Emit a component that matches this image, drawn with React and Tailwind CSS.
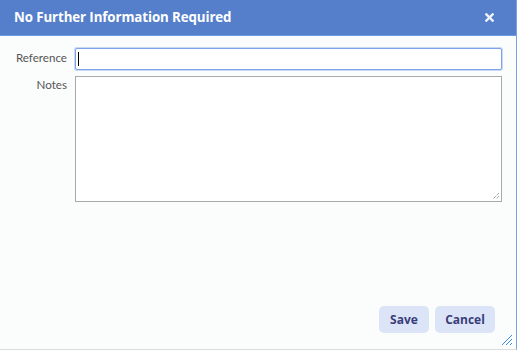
import React from 'react';

const Dialog = () => {
  return (
    <div className="w-[517px] h-[350px] flex flex-col bg-[#fbfcfc] border-r border-[#7aa0e0] border-b border-b-[#dcdcdc] relative" style={{ fontFamily: '"Open Sans", "Noto Sans", sans-serif' }}>
      {/* Title bar */}
      <div className="h-[36px] shrink-0 flex items-center justify-between bg-[#557fcb] border-b border-[#6b9be0] pl-[14px] pr-[22px]">
        <h1 className="text-white font-bold text-[13.3px] leading-none tracking-[-0.1px]">No Further Information Required</h1>
        <svg width="9" height="9" viewBox="0 0 10 10">
          <path d="M1.5 1.5 L8.5 8.5 M8.5 1.5 L1.5 8.5" stroke="#eef3fb" strokeWidth="2.6" strokeLinecap="square" />
        </svg>
      </div>

      {/* Form body */}
      <div className="flex-1 flex flex-col pt-[12px] pl-[8px] pr-[14px]" style={{ fontFamily: 'Lato, "Open Sans", sans-serif' }}>
        <div className="flex items-center gap-[8px]">
          <label className="w-[59px] text-right text-[11.6px] text-[#555] leading-none -mt-[2px]">Reference</label>
          <div className="flex-1 h-[22px] border border-[#7ea3e8] rounded-[2px] bg-white shadow-[0_0_0_1px_#c9d9f5] flex items-center pl-[2px]">
            <span className="w-px h-[14px] bg-black" />
          </div>
        </div>
        <div className="flex items-start gap-[8px] mt-[6px]">
          <label className="w-[59px] text-right text-[11.6px] text-[#555] leading-none pt-[3px]">Notes</label>
          <div className="flex-1 h-[126px] border border-[#a9a9a9] bg-white relative">
            <svg width="9" height="9" viewBox="0 0 9 9" className="absolute right-[1px] bottom-[1px]">
              <path d="M8 2 L2 8 M8 5 L5 8" stroke="#777" strokeWidth="1" strokeDasharray="1 1" />
            </svg>
          </div>
        </div>
      </div>

      {/* Buttons */}
      <div className="flex justify-end gap-[6px] pr-[21px] pb-[16px]">
        <button className="h-[27px] w-[50px] rounded-[5px] bg-[#dce5f8] text-[#3a3d78] font-bold text-[12px]">Save</button>
        <button className="h-[27px] w-[60px] rounded-[5px] bg-[#dce5f8] text-[#3a3d78] font-bold text-[12px]">Cancel</button>
      </div>

      <svg width="12" height="12" viewBox="0 0 12 12" className="absolute right-[3px] bottom-[3px]">
        <path d="M11 1 L1 11 M11 5 L5 11 M11 9 L9 11" stroke="#3f8be0" strokeWidth="1" />
      </svg>
    </div>
  );
};

export default function App() {
  return <Dialog />;
}
